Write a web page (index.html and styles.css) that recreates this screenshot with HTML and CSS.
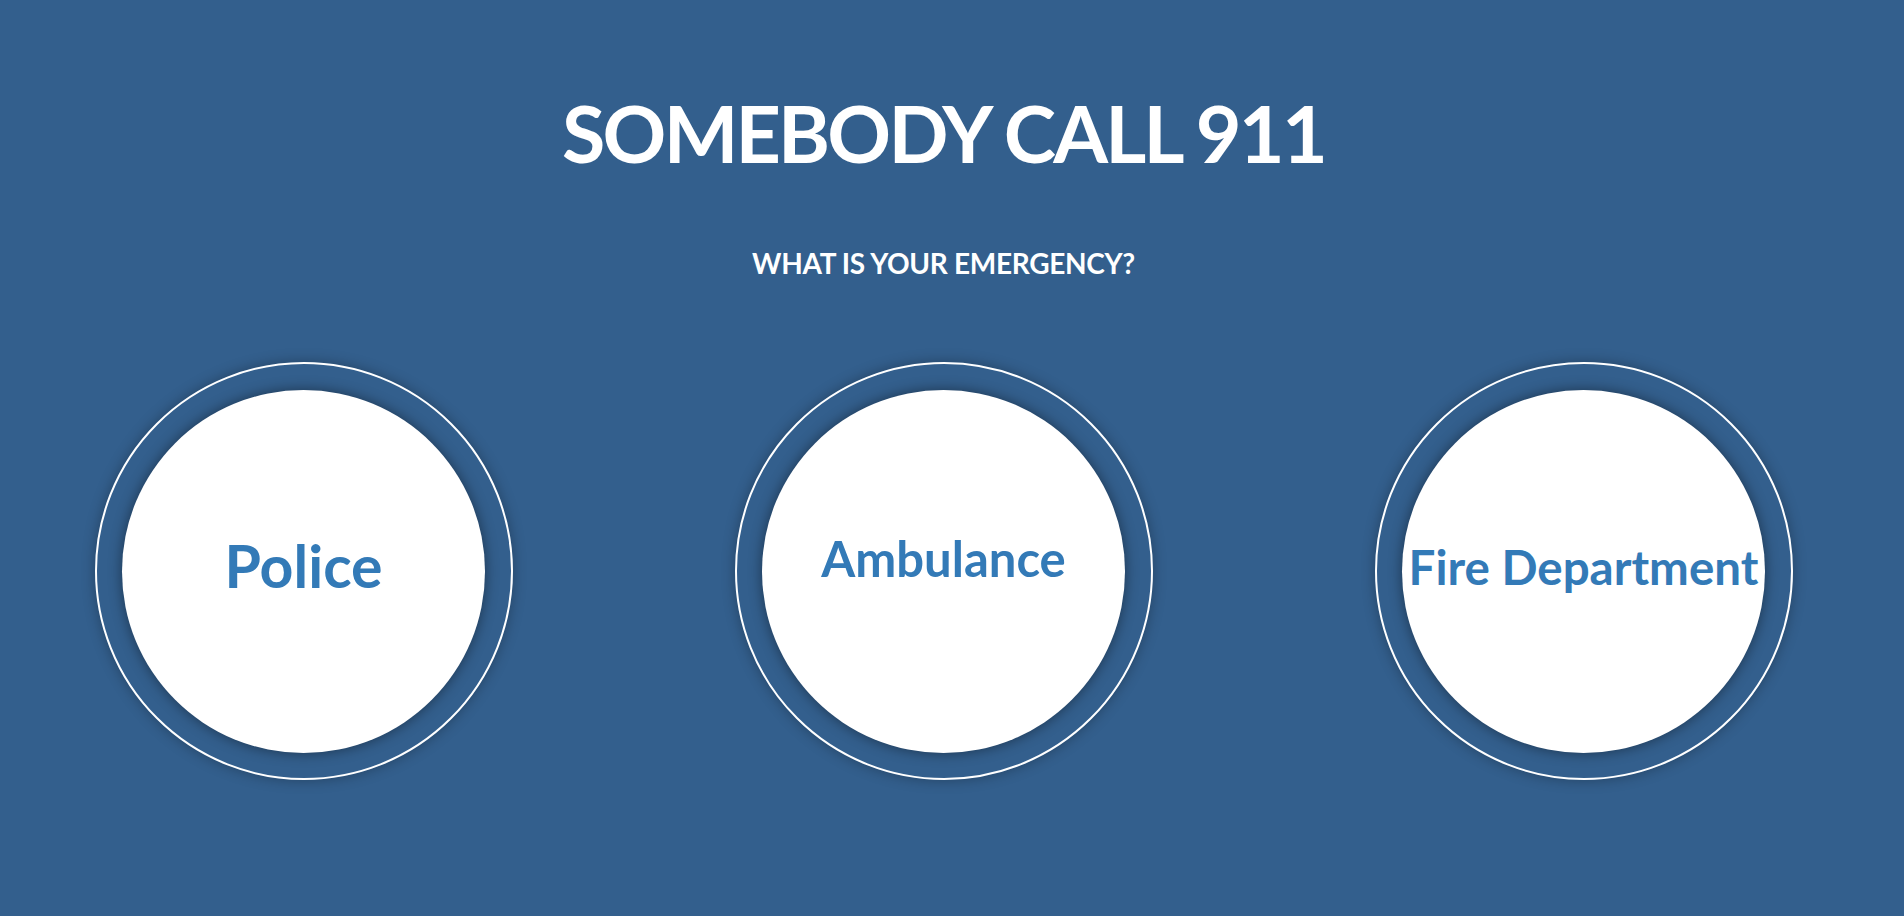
FILE: index.html
```html
<!DOCTYPE html>
<html lang="en">
<head>
<meta charset="utf-8">
<title>Somebody Call 911</title>
<link rel="stylesheet" href="styles.css">
</head>
<body>
<main class="page">
  <h1 class="title">SOMEBODY CALL 911</h1>
  <p class="subtitle">WHAT IS YOUR EMERGENCY?</p>
  <div class="choices">
    <a class="ring" href="#police"><span class="disc"><span class="label label-police">Police</span></span></a>
    <a class="ring" href="#ambulance"><span class="disc"><span class="label label-ambulance">Ambulance</span></span></a>
    <a class="ring" href="#fire"><span class="disc"><span class="label label-fire">Fire Department</span></span></a>
  </div>
</main>
</body>
</html>
```

FILE: styles.css
```css
html, body {
  margin: 0;
  padding: 0;
  height: 100%;
}

body {
  background: #335f8d;
  font-family: Lato, "Open Sans", "Liberation Sans", sans-serif;
  color: #fff;
}

.page {
  width: 1887px;
  display: flex;
  flex-direction: column;
  align-items: center;
}

.title {
  margin: 93px 0 0;
  font-size: 79px;
  line-height: 1;
  font-weight: 700;
  letter-spacing: -2.8px;
}

.subtitle {
  margin: 77px 0 0;
  font-size: 28px;
  line-height: 1;
  font-weight: 700;
  letter-spacing: -0.3px;
}

.choices {
  margin-top: 85px;
  display: flex;
  justify-content: center;
  gap: 222px;
}

.ring {
  width: 414px;
  height: 414px;
  border: 2px solid #fff;
  border-radius: 50%;
  box-shadow: 0 0 14px rgba(0, 0, 0, 0.3);
  display: flex;
  align-items: center;
  justify-content: center;
  text-decoration: none;
}

.disc {
  width: 363px;
  height: 363px;
  border-radius: 50%;
  background: #fff;
  box-shadow: 0 0 14px rgba(0, 0, 0, 0.45);
  display: flex;
  align-items: center;
  justify-content: center;
}

.label {
  color: #337ab7;
  font-weight: 700;
  line-height: 1;
  white-space: nowrap;
}

.label-police {
  font-size: 59px;
  margin-bottom: 12px;
}

.label-ambulance {
  font-size: 49px;
  margin-bottom: 26px;
}

.label-fire {
  font-size: 47.5px;
  margin-bottom: 8px;
}
```
